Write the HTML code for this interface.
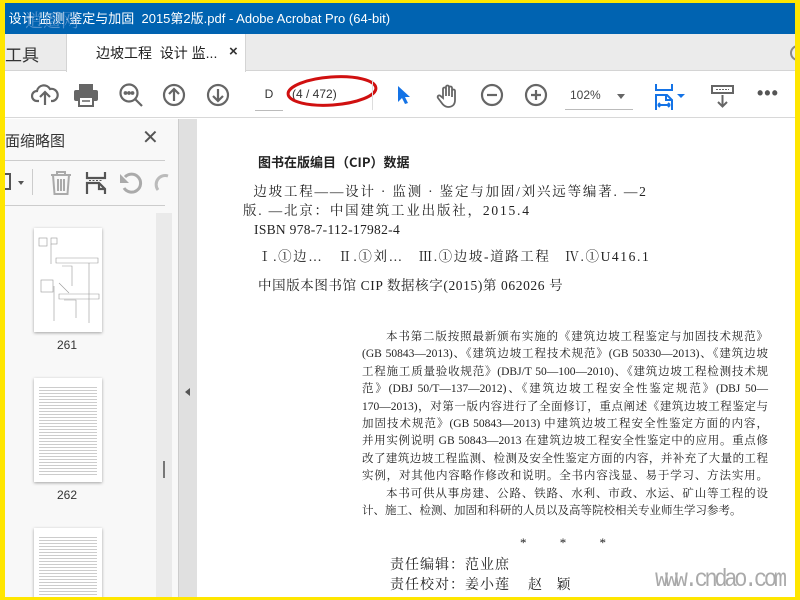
<!DOCTYPE html>
<html><head><meta charset="utf-8"><style>
*{margin:0;padding:0;box-sizing:border-box}
body{width:800px;height:600px;overflow:hidden;background:#ffe600;position:relative;font-family:"Liberation Sans","Noto Sans CJK SC",sans-serif}
.a{position:absolute}
.serif{font-family:"Liberation Serif","Noto Serif CJK SC",serif;color:#222}
.ic{position:absolute;stroke:#666;fill:none;stroke-width:2.2}
.p div{white-space:nowrap;height:17.4px;text-align:justify;text-align-last:justify}
</style></head><body>
<div class="a" style="left:5px;top:3px;width:790px;height:594px;background:#fff;overflow:hidden">
<!-- title bar -->
<div class="a" style="left:0;top:0;width:790px;height:31px;background:#0063b1;color:#fff;font-size:13px;line-height:31px;white-space:nowrap">&nbsp;设计·监测·鉴定与加固&nbsp; 2015第2版.pdf - Adobe Acrobat Pro (64-bit)</div>
<div class="a" style="left:20px;top:4px;font-size:18px;color:#7aa6d6;font-family:'Noto Serif CJK SC',serif;opacity:.7">逍遥网</div>
<!-- tab bar -->
<div class="a" style="left:0;top:31px;width:790px;height:37px;background:#ebebeb;border-bottom:1px solid #d4d4d4"></div>
<div class="a" style="left:0;top:38px;font-size:17px;color:#333">工具</div>
<div class="a" style="left:61px;top:31px;width:180px;height:38px;background:#fff;border-left:1px solid #d4d4d4;border-right:1px solid #d4d4d4"></div>
<div class="a" style="left:91px;top:40px;font-size:14px;color:#222">边坡工程&nbsp; 设计 监...</div>
<div class="a" style="left:224px;top:40px;font-size:15px;color:#333;font-weight:bold">×</div>
<div class="a" style="left:785px;top:42px;width:16px;height:16px;border:2px solid #888;border-radius:50%"></div>
<!-- toolbar -->
<div class="a" style="left:0;top:69px;width:790px;height:46px;background:#fff;border-bottom:1px solid #d8d8d8"></div>
<svg class="ic" style="left:26px;top:78px" width="28" height="28" viewBox="0 0 28 28"><path d="M8 20H6a5 5 0 0 1 0-10 7 7 0 0 1 13-2 5 5 0 0 1 3 12h-2M14 24V12M9 16l5-5 5 5"/></svg>
<svg class="a" style="left:68px;top:80px" width="26" height="24" viewBox="0 0 26 24"><rect x="6" y="1" width="14" height="6" fill="#666"/><rect x="1" y="7" width="24" height="11" rx="2" fill="#666"/><rect x="6" y="14" width="14" height="9" fill="#fff" stroke="#666" stroke-width="2"/><path d="M9 18h8" stroke="#666" stroke-width="1.5"/></svg>
<svg class="ic" style="left:113px;top:79px" width="28" height="28" viewBox="0 0 28 28"><circle cx="11" cy="11" r="8.5"/><path d="M17 17l7 7"/><circle cx="7.5" cy="11" r=".8" fill="#666"/><circle cx="11" cy="11" r=".8" fill="#666"/><circle cx="14.5" cy="11" r=".8" fill="#666"/></svg>
<svg class="ic" style="left:157px;top:80px" width="24" height="24" viewBox="0 0 24 24"><circle cx="12" cy="12" r="10"/><path d="M12 18V6M7 11l5-5 5 5"/></svg>
<svg class="ic" style="left:201px;top:80px" width="24" height="24" viewBox="0 0 24 24"><circle cx="12" cy="12" r="10"/><path d="M12 6v12M7 13l5 5 5-5"/></svg>
<div class="a" style="left:250px;top:80px;width:28px;height:28px;border-bottom:1px solid #bbb;font-size:12px;color:#333;text-align:center;line-height:22px">D</div>
<div class="a" style="left:287px;top:84px;font-size:12px;color:#333">(4 / 472)</div>
<svg class="a" style="left:280px;top:70px" width="96" height="36" viewBox="0 0 96 36"><ellipse cx="47" cy="18" rx="44" ry="14" fill="none" stroke="#d01010" stroke-width="3" transform="rotate(-4 47 18)"/></svg>
<div class="a" style="left:367px;top:77px;width:1px;height:30px;background:#ddd"></div>
<svg class="a" style="left:392px;top:82px" width="14" height="20" viewBox="0 0 14 20"><path d="M1 1v16l4-4 3 6 3-1-3-6h5z" fill="#1473e6"/></svg>
<svg class="ic" style="left:430px;top:80px" width="26" height="26" viewBox="0 0 26 26"><path d="M8 15V6a1.5 1.5 0 0 1 3 0v7V4a1.5 1.5 0 0 1 3 0v9V5a1.5 1.5 0 0 1 3 0v9V8a1.5 1.5 0 0 1 3 0v9c0 5-3 7-7 7-3 0-5-2-7-5l-3-4a1.5 1.5 0 0 1 2.5-2z" stroke-width="1.8"/></svg>
<svg class="ic" style="left:475px;top:80px" width="24" height="24" viewBox="0 0 24 24"><circle cx="12" cy="12" r="10"/><path d="M7 12h10"/></svg>
<svg class="ic" style="left:519px;top:80px" width="24" height="24" viewBox="0 0 24 24"><circle cx="12" cy="12" r="10"/><path d="M7 12h10M12 7v10"/></svg>
<div class="a" style="left:560px;top:81px;width:68px;height:26px;border-bottom:1px solid #bbb;font-size:12px;color:#444;padding-left:5px;line-height:22px">102%</div>
<div class="a" style="left:612px;top:91px;border:4px solid transparent;border-top:5px solid #666"></div>
<svg class="a" style="left:650px;top:80px" width="36" height="28" viewBox="0 0 36 28"><path d="M1 1v6h16V1M1 27V12h11l5 5v10M3 22h12M3 22l2-2M3 22l2 2M15 22l-2-2M15 22l-2 2M11 12v5h6" fill="none" stroke="#1473e6" stroke-width="2"/><path d="M22 11h8l-4 4z" fill="#1473e6"/></svg>
<svg class="a" style="left:706px;top:82px" width="24" height="24" viewBox="0 0 24 24"><rect x="1" y="1" width="21" height="7" fill="none" stroke="#666" stroke-width="2"/><path d="M5 4.5h13" stroke="#666" stroke-dasharray="2 1"/><path d="M11.5 10v11M7 17l4.5 4.5L16 17" fill="none" stroke="#666" stroke-width="2"/></svg>
<div class="a" style="left:752px;top:80px;font-size:18px;color:#555;letter-spacing:1px;font-weight:bold">•••</div>
<!-- sidebar -->
<div class="a" style="left:0;top:116px;width:173px;height:480px;background:#f8f8f8"></div>
<div class="a" style="left:0;top:127px;font-size:15px;color:#333">面缩略图</div>
<div class="a" style="left:137px;top:122px;font-size:20px;color:#555">✕</div>
<div class="a" style="left:0;top:157px;width:160px;height:1px;background:#ccc"></div>
<div class="a" style="left:0;top:170px;width:6px;height:17px;border:2px solid #555;border-left:none"></div>
<div class="a" style="left:13px;top:178px;border:3px solid transparent;border-top:4px solid #555"></div>
<div class="a" style="left:27px;top:166px;width:1px;height:26px;background:#ccc"></div>
<svg class="a" style="left:45px;top:168px" width="22" height="24" viewBox="0 0 22 24"><path d="M1 4h20M7 4V1h8v3M3 4l1.5 19h13L19 4M8 8v12M11 8v12M14 8v12" fill="none" stroke="#aaa" stroke-width="2"/></svg>
<svg class="a" style="left:80px;top:168px" width="22" height="24" viewBox="0 0 22 24"><path d="M2 1v6h18V1M2 23V12h12l6 6v5M14 12v6h6" fill="none" stroke="#555" stroke-width="2.2"/><path d="M4 9.5h14" stroke="#555" stroke-dasharray="2 1.5"/></svg>
<svg class="a" style="left:113px;top:168px" width="26" height="26" viewBox="0 0 26 26"><path d="M6 17a9 9 0 1 0 1-11" fill="none" stroke="#aaa" stroke-width="3"/><path d="M2 3v9h9z" fill="#aaa"/></svg>
<svg class="a" style="left:145px;top:168px" width="20" height="26" viewBox="0 0 20 26"><path d="M18 5a9 9 0 0 0-10 14" fill="none" stroke="#bbb" stroke-width="3"/></svg>
<div class="a" style="left:0;top:202px;width:160px;height:1px;background:#ccc"></div>
<div class="a" style="left:151px;top:210px;width:16px;height:386px;background:#eaeaea"></div>
<div class="a" style="left:158px;top:458px;width:2px;height:17px;background:#777"></div>
<div class="a" style="left:29px;top:225px;width:68px;height:104px;background:#fff;box-shadow:0 1px 3px rgba(0,0,0,.35)">
<svg width="68" height="104"><g stroke="#999" fill="none" stroke-width=".6"><rect x="5" y="10" width="8" height="8"/><rect x="17" y="10" width="6" height="6"/><path d="M17 16v20M22 30h42v5H22zM28 38h10v20M55 35v60M25 55l10 10"/><rect x="7" y="52" width="12" height="12"/><path d="M20 58v35M25 66h40v5H25zM30 72h12v18"/></g></svg></div>
<div class="a" style="left:52px;top:335px;font-size:12px;color:#333">261</div>
<div class="a" style="left:29px;top:375px;width:68px;height:104px;background:#fff;box-shadow:0 1px 3px rgba(0,0,0,.35);padding:7px 5px"><div style="width:100%;height:100%;background:repeating-linear-gradient(#fff 0 2px,#ccc 2px 3px)"></div></div>
<div class="a" style="left:52px;top:485px;font-size:12px;color:#333">262</div>
<div class="a" style="left:29px;top:525px;width:68px;height:80px;background:#fff;box-shadow:0 1px 3px rgba(0,0,0,.35);padding:7px 5px"><div style="width:100%;height:100%;background:repeating-linear-gradient(#fff 0 2px,#ccc 2px 3px)"></div></div>
<!-- splitter + doc -->
<div class="a" style="left:173px;top:116px;width:19px;height:480px;background:#e0e0e0;border-left:1px solid #ccc"></div>
<div class="a" style="left:180px;top:385px;border:4px solid transparent;border-right:5px solid #555;border-left:none"></div>
<div class="a" style="left:192px;top:116px;width:598px;height:480px;background:#fff"></div>
<div class="a serif" style="left:253px;top:149px;font-size:13px;font-weight:bold;font-family:'Noto Sans CJK SC',sans-serif">图书在版编目（CIP）数据</div>
<div class="a serif" style="left:238px;top:179px;font-size:13.5px;line-height:19px;width:430px;white-space:nowrap;letter-spacing:1.8px">&nbsp;&nbsp;边坡工程——设计 · 监测 · 鉴定与加固/刘兴远等编著. —2<br>版. —北京：中国建筑工业出版社，2015.4<br><span style="letter-spacing:0.3px">&nbsp;&nbsp;&nbsp;ISBN 978-7-112-17982-4</span></div>
<div class="a serif" style="left:253px;top:242px;font-size:13.5px;white-space:nowrap;letter-spacing:1.6px">Ⅰ.①边…&nbsp;&nbsp; Ⅱ.①刘…&nbsp;&nbsp; Ⅲ.①边坡-道路工程&nbsp;&nbsp; Ⅳ.①U416.1</div>
<div class="a serif" style="left:253px;top:271px;font-size:13.5px;white-space:nowrap;letter-spacing:0.6px">中国版本图书馆 CIP 数据核字(2015)第 062026 号</div>
<div class="a serif p" style="left:357px;top:326px;width:406px;font-size:11.5px;line-height:17.4px">
<div style="padding-left:24px">本书第二版按照最新颁布实施的《建筑边坡工程鉴定与加固技术规范》</div>
<div>(GB 50843—2013)、《建筑边坡工程技术规范》(GB 50330—2013)、《建筑边坡</div>
<div>工程施工质量验收规范》(DBJ/T 50—100—2010)、《建筑边坡工程检测技术规</div>
<div>范》(DBJ 50/T—137—2012)、《建筑边坡工程安全性鉴定规范》(DBJ 50—</div>
<div>170—2013)，对第一版内容进行了全面修订，重点阐述《建筑边坡工程鉴定与</div>
<div>加固技术规范》(GB 50843—2013) 中建筑边坡工程安全性鉴定方面的内容，</div>
<div>并用实例说明 GB 50843—2013 在建筑边坡工程安全性鉴定中的应用。重点修</div>
<div>改了建筑边坡工程监测、检测及安全性鉴定方面的内容，并补充了大量的工程</div>
<div>实例，对其他内容略作修改和说明。全书内容浅显、易于学习、方法实用。</div>
<div style="padding-left:24px">本书可供从事房建、公路、铁路、水利、市政、水运、矿山等工程的设</div>
<div style="text-align-last:left">计、施工、检测、加固和科研的人员以及高等院校相关专业师生学习参考。</div>
</div>
<div class="a serif" style="left:515px;top:532px;font-size:13px;word-spacing:30px">* * *</div>
<div class="a serif" style="left:385px;top:553px;font-size:14px;line-height:20px;letter-spacing:1px">责任编辑：范业庶<br>责任校对：姜小莲&nbsp;&nbsp;&nbsp; 赵&nbsp;&nbsp; 颖</div>
<div class="a" style="left:650px;top:564px;font-size:22px;color:#aaa;font-family:'Liberation Mono',monospace;letter-spacing:-3.3px;transform:scaleY(1.15)">www.cndao.com</div>
</div>
</body></html>
